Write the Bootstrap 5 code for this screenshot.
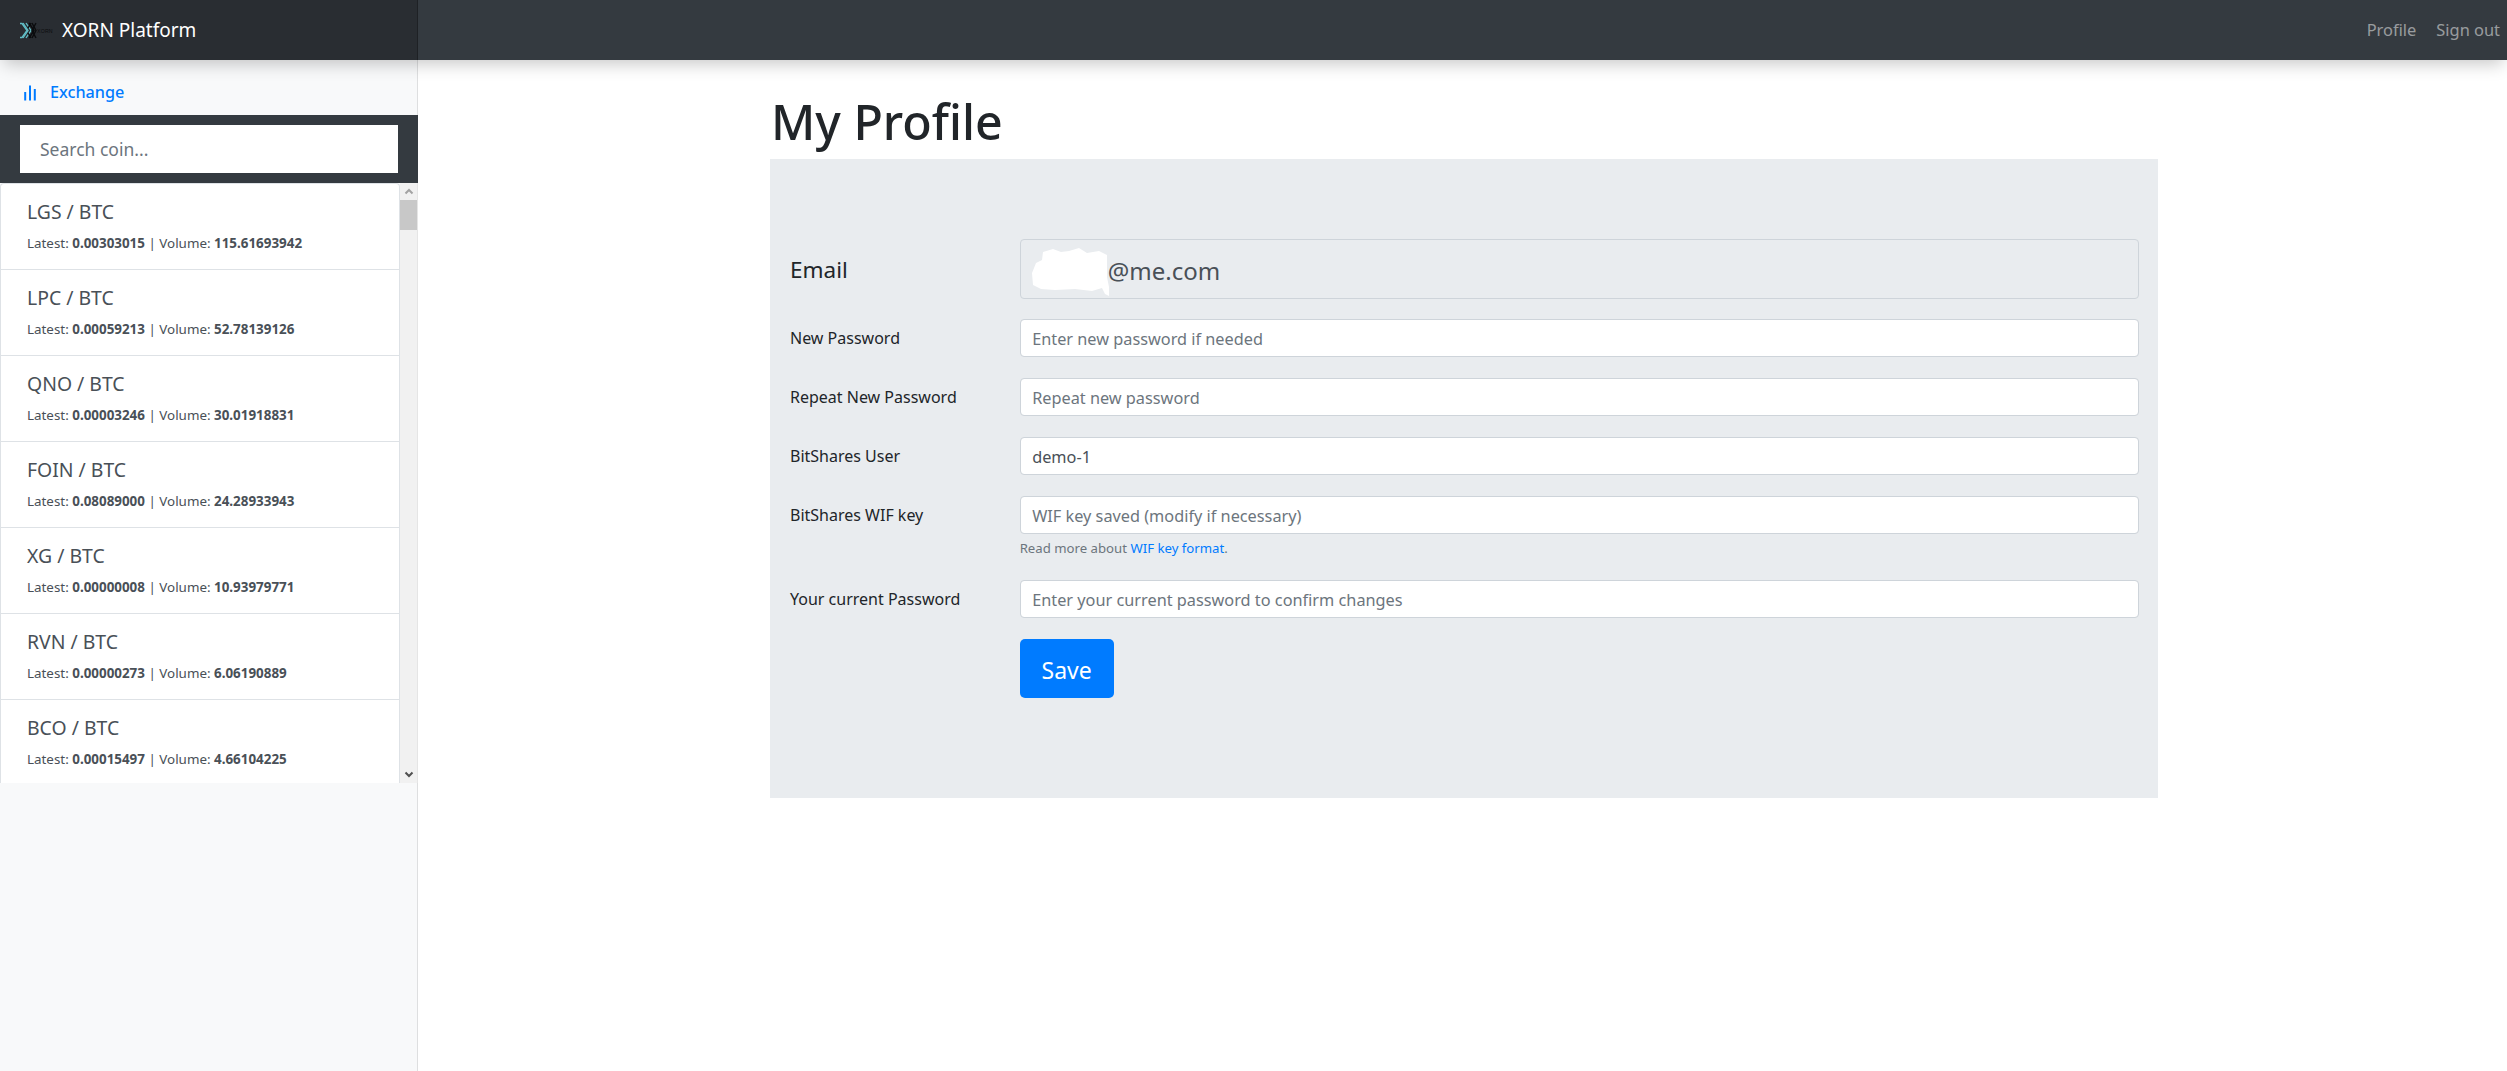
<!DOCTYPE html>
<html lang="en">
<head>
<meta charset="utf-8">
<title>XORN Platform</title>
<link rel="stylesheet" href="https://cdn.jsdelivr.net/npm/bootstrap@5.3.0/dist/css/bootstrap.min.css">
<style>
html,body{height:100%;overflow:hidden}
body{font-family:"Noto Sans","Open Sans",sans-serif;font-size:16px;color:#212529;background:#fff}
.topbar{height:60px;background:#343a40;position:relative;z-index:5;box-shadow:0 8px 16px -4px rgba(0,0,0,.22)}
.brandbox{width:418px;height:60px;background:#292d32;box-shadow:inset -1px 0 0 rgba(0,0,0,.25);padding-left:20px;gap:8px;color:#fff;font-size:19px;text-decoration:none}
.toplink{color:rgba(255,255,255,.5);font-size:16.4px;text-decoration:none}
.toplinks{gap:20px;padding-right:7px}
.shell{height:1011px}
.sidepane{width:418px;background:#f8f9fa;box-shadow:inset -1px 0 0 rgba(0,0,0,.1);flex:none}
.exlink{height:55px;padding-left:24px;padding-top:10px;gap:14px;color:#007bff;font-size:16.2px;font-weight:500;text-decoration:none}
.searchbox{height:68px;background:#343a40;padding:10px 20px 10px 20px}
.searchbox .form-control{height:48px;border:0;border-radius:0;padding:0 20px;font-size:17.5px;width:378px}
.form-control::placeholder{color:#6c757d}
.coinwrap{height:600px;width:418px}
.coinlist{width:400px;overflow:hidden;background:#fff;border-left:1px solid #dee2e6;border-right:1px solid #dee2e6;border-top:1px solid #dee2e6;border-radius:4px 4px 0 0}
.coinitem{height:86px;padding:15px 26px 0;border-bottom:1px solid #dee2e6;color:#495057;flex:none}
.coinname{font-size:19.4px;line-height:26px;margin-bottom:9px}
.coinsub{font-size:13.4px;line-height:18px}
.scrolltrack{width:18px;background:#f1f1f1;flex:none;border-right:1px solid #e5e5e5}
.scrollbtn{height:17px;flex:none}
.scrollthumb{height:30px;background:#c8c8c8;flex:none}
.pagemain{flex:1 1 auto;min-width:0}
.pagebox{width:1388px;margin-left:352px}
.pagetitle{font-size:48.3px;font-weight:500;line-height:99px;margin:0;height:99px;padding-left:1px;padding-top:12px;color:#212529}
.formpanel{background:#e9ecef;padding:80px 20px;height:639px}
.formrow{--bs-gutter-x:30px;margin-bottom:21px}
.formrow.bigrow{margin-bottom:20px}
.formrow.helprow{margin-bottom:20px}
.formrow label{font-size:16px;line-height:22px;color:#212529;padding:8px 15px 8px}
.formrow .form-control{width:calc(100% + 1px);height:38px;border-radius:4px;border-color:#ced4da;font-size:16.3px;padding:7px 12px 5px 11.5px;color:#495057}
.formrow.bigrow label{font-size:22.5px;line-height:34px;padding:14px 15px 12px}
.formrow.bigrow .form-control{height:60px;font-size:24px;padding:8px 12px 6px 87px;background:#e9ecef;opacity:1}
.helpline{font-size:13.2px;line-height:17px;color:#6c757d;margin-top:6px;margin-bottom:23px}
.helpline a{color:#007bff;text-decoration:none}
.maskblob{position:absolute;left:26px;top:7px;width:80px;height:50px}
.savebtn{width:94px;height:59px;background:#007bff;border:0;border-radius:5px;color:#fff;font-size:23px;padding:3px 0 0;line-height:1;margin-top:1px}
</style>
</head>
<body>
<header class="topbar d-flex align-items-center justify-content-between">
  <a class="brandbox d-flex align-items-center" href="#">
    <svg width="34" height="17" viewBox="0 0 34 17" aria-hidden="true">
      <g fill="none" stroke="#62c0c8" stroke-width="1.3">
        <path d="M0 1.5h2l5 7-5 7H0"/><path d="M3 1l5 7.5L3 16"/><path d="M6 1l5 7.5L6 16"/>
      </g>
      <g fill="none" stroke="#0b0c0e" stroke-width="1.4">
        <path d="M9 1l5 7.5L9 16"/><path d="M12 1l4 7.5L12 16"/><path d="M16 1l-4 7.5L16 16"/><path d="M11 1l-3 5M11 16l-3-5"/>
      </g>
      <text x="17" y="11" font-size="5.2" fill="#0b0c0e" font-family="Liberation Sans, sans-serif" letter-spacing=".2">XORN</text>
    </svg>
    <span>XORN Platform</span>
  </a>
  <nav class="toplinks d-flex align-items-center">
    <a class="toplink" href="#">Profile</a>
    <a class="toplink" href="#">Sign out</a>
  </nav>
</header>
<div class="shell d-flex">
  <aside class="sidepane">
    <a class="exlink d-flex align-items-center" href="#">
      <svg width="12" height="16" viewBox="0 0 12 16" aria-hidden="true"><path d="M1.2 15.5V7M6 15.5V.5M10.8 15.5V4" fill="none" stroke="#007bff" stroke-width="2"/></svg>
      <span>Exchange</span>
    </a>
    <div class="searchbox"><input class="form-control" type="text" placeholder="Search coin..."></div>
    <div class="coinwrap d-flex">
      <div class="coinlist d-flex flex-column flex-grow-1">
        <div class="coinitem"><div class="coinname">LGS / BTC</div><div class="coinsub">Latest: <b>0.00303015</b> | Volume: <b>115.61693942</b></div></div>
        <div class="coinitem"><div class="coinname">LPC / BTC</div><div class="coinsub">Latest: <b>0.00059213</b> | Volume: <b>52.78139126</b></div></div>
        <div class="coinitem"><div class="coinname">QNO / BTC</div><div class="coinsub">Latest: <b>0.00003246</b> | Volume: <b>30.01918831</b></div></div>
        <div class="coinitem"><div class="coinname">FOIN / BTC</div><div class="coinsub">Latest: <b>0.08089000</b> | Volume: <b>24.28933943</b></div></div>
        <div class="coinitem"><div class="coinname">XG / BTC</div><div class="coinsub">Latest: <b>0.00000008</b> | Volume: <b>10.93979771</b></div></div>
        <div class="coinitem"><div class="coinname">RVN / BTC</div><div class="coinsub">Latest: <b>0.00000273</b> | Volume: <b>6.06190889</b></div></div>
        <div class="coinitem"><div class="coinname">BCO / BTC</div><div class="coinsub">Latest: <b>0.00015497</b> | Volume: <b>4.66104225</b></div></div>
      </div>
      <div class="scrolltrack d-flex flex-column">
        <div class="scrollbtn d-flex align-items-center justify-content-center"><svg width="10" height="7" viewBox="0 0 10 7" aria-hidden="true"><path d="M1.5 5.5L5 2l3.5 3.5" fill="none" stroke="#a3a3a3" stroke-width="2"/></svg></div>
        <div class="scrollthumb"></div>
        <div class="flex-grow-1"></div>
        <div class="scrollbtn d-flex align-items-center justify-content-center"><svg width="10" height="7" viewBox="0 0 10 7" aria-hidden="true"><path d="M1.5 1.5L5 5l3.5-3.5" fill="none" stroke="#505050" stroke-width="2"/></svg></div>
      </div>
    </div>
  </aside>
  <main class="pagemain">
    <div class="pagebox">
      <h1 class="pagetitle">My Profile</h1>
      <div class="formpanel">
        <form>
          <div class="row formrow bigrow">
            <label class="col-2 col-form-label">Email</label>
            <div class="col-10 position-relative">
              <input class="form-control" type="text" value="@me.com" disabled>
              <svg class="maskblob" viewBox="0 0 80 50" aria-hidden="true"><path d="M12 6l10-3 8 3 8-1 10-3 8 5 12-2 8 4 0 22 2 10 0 9-4-2-3-6-10 3-17-2-20 1-14-1-8-4L1 27l4-10 6-3z" fill="#fff"/></svg>
            </div>
          </div>
          <div class="row formrow">
            <label class="col-2 col-form-label">New Password</label>
            <div class="col-10"><input class="form-control" type="password" placeholder="Enter new password if needed"></div>
          </div>
          <div class="row formrow">
            <label class="col-2 col-form-label">Repeat New Password</label>
            <div class="col-10"><input class="form-control" type="password" placeholder="Repeat new password"></div>
          </div>
          <div class="row formrow">
            <label class="col-2 col-form-label">BitShares User</label>
            <div class="col-10"><input class="form-control" type="text" value="demo-1"></div>
          </div>
          <div class="row formrow mb-0">
            <label class="col-2 col-form-label">BitShares WIF key</label>
            <div class="col-10">
              <input class="form-control" type="password" placeholder="WIF key saved (modify if necessary)">
              <div class="helpline">Read more about <a href="#">WIF key format</a>.</div>
            </div>
          </div>
          <div class="row formrow helprow">
            <label class="col-2 col-form-label">Your current Password</label>
            <div class="col-10"><input class="form-control" type="password" placeholder="Enter your current password to confirm changes"></div>
          </div>
          <div class="row formrow">
            <div class="col-10 offset-2"><button class="savebtn" type="button">Save</button></div>
          </div>
        </form>
      </div>
    </div>
  </main>
</div>
<script src="https://cdn.jsdelivr.net/npm/bootstrap@5.3.0/dist/js/bootstrap.bundle.min.js"></script>
</body>
</html>
